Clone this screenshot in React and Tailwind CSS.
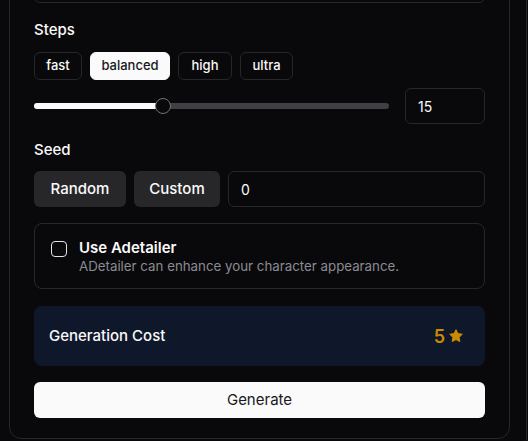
import { useState } from "react";

const presets = [
  { id: "fast", w: "w-[48px]" },
  { id: "balanced", w: "w-[80px]" },
  { id: "high", w: "w-[54px]" },
  { id: "ultra", w: "w-[53px]" },
];

const Star = () => (
  <svg viewBox="0 0 24 24" className="w-4 h-4" fill="#ca8a04" stroke="#ca8a04" strokeWidth="1.5" strokeLinejoin="round">
    <path d="M12 2.5l2.9 5.9 6.5.95-4.7 4.6 1.1 6.45L12 17.35l-5.8 3.05 1.1-6.45-4.7-4.6 6.5-.95z" />
  </svg>
);

export default function App() {
  const [preset, setPreset] = useState("balanced");
  const [steps] = useState(15);
  const [seed] = useState("0");
  const [adetailer, setAdetailer] = useState(false);

  return (
    <div
      className="h-[441px] overflow-hidden bg-[#09090b] flex gap-4 pl-[9px] text-[#fafafa]"
      style={{ fontFamily: "Inter, 'Noto Sans', sans-serif" }}
    >
      <div className="w-[501px] shrink-0 self-start mt-[-58px] border border-[#27272a] rounded-xl px-6 pt-6 pb-5">
        {/* prompt field above, scrolled off */}
        <div className="h-9 border border-[#27272a] rounded-md" />

        {/* Steps */}
        <div className="mt-[17px]">
          <div className="h-5 leading-5 text-[15px] font-medium">Steps</div>
          <div className="mt-3 flex gap-2">
            {presets.map((p) => (
              <button
                key={p.id}
                onClick={() => setPreset(p.id)}
                className={`${p.w} h-7 rounded-md text-[13px] font-medium border ${
                  preset === p.id
                    ? "bg-[#fafafa] text-[#18181b] border-[#fafafa]"
                    : "border-[#27272a] text-[#fafafa]"
                }`}
              >
                {p.id}
              </button>
            ))}
          </div>
          <div className="mt-2 flex items-center gap-4 h-9">
            <div className="relative flex-1 h-1.5 rounded-full bg-[#3f3f46]">
              <div className="absolute left-0 top-0 h-1.5 w-[129px] rounded-full bg-[#fafafa]" />
              <div className="absolute left-[121px] top-[-5px] w-4 h-4 rounded-full bg-[#09090b] border-[1.5px] border-[#71717a]" />
            </div>
            <div className="w-20 h-9 border border-[#27272a] rounded-md px-3 flex items-center text-[14px]">
              {steps}
            </div>
          </div>
        </div>

        {/* Seed */}
        <div className="mt-4">
          <div className="h-5 leading-5 text-[15px] font-medium">Seed</div>
          <div className="mt-[11px] flex gap-2 h-9">
            <button className="w-[92px] rounded-md bg-[#27272a] text-[15px] font-medium">Random</button>
            <button className="w-[86px] rounded-md bg-[#27272a] text-[15px] font-medium">Custom</button>
            <div className="flex-1 border border-[#27272a] rounded-md px-3 flex items-center text-[14px]">
              {seed}
            </div>
          </div>
        </div>

        {/* Adetailer */}
        <div
          onClick={() => setAdetailer(!adetailer)}
          className="mt-4 h-[66px] border border-[#27272a] rounded-lg px-4 pt-[15px] flex items-start gap-3"
        >
          <div className="mt-[2px] w-4 h-4 rounded-[4px] border-[1.5px] border-[#e4e4e7] shrink-0" />
          <div>
            <div className="leading-[18px] text-[15px] font-semibold">Use Adetailer</div>
            <div className="leading-[18px] text-[13.3px] text-[#8b8b93]">
              ADetailer can enhance your character appearance.
            </div>
          </div>
        </div>

        {/* Cost */}
        <div className="mt-[17px] h-[60px] rounded-lg bg-[#0f172a] pl-[15px] pr-[21px] flex items-center justify-between">
          <span className="text-[15px] font-medium">Generation Cost</span>
          <span className="flex items-center gap-[3px] text-[18px] font-semibold text-[#ca8a04]">
            5
            <Star />
          </span>
        </div>

        <button className="mt-4 w-full h-9 rounded-md bg-[#fafafa] text-[#18181b] text-[15px]">
          Generate
        </button>
      </div>
      <div className="flex-1 border-l border-t border-[#27272a] rounded-tl-xl mt-[-20px]" />
    </div>
  );
}
